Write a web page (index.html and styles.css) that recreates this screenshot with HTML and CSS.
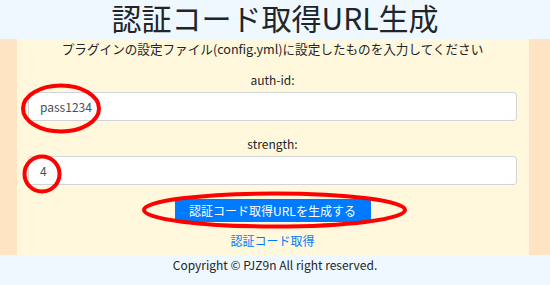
FILE: index.html
```html
<!DOCTYPE html>
<html lang="ja">
<head>
<meta charset="utf-8">
<title>認証コード取得URL生成</title>
<link rel="stylesheet" href="styles.css">
</head>
<body>
<header class="site-header">
  <h1 class="title">認証コード取得URL生成</h1>
</header>
<div class="page">
  <main class="content">
    <p class="lead">プラグインの設定ファイル(config.yml)に設定したものを入力してください</p>
    <div class="field field-first">
      <label class="field-label" for="auth-id">auth-id:</label>
      <input class="field-input" id="auth-id" type="text" value="pass1234">
    </div>
    <div class="field field-second">
      <label class="field-label" for="strength">strength:</label>
      <input class="field-input" id="strength" type="text" value="4">
    </div>
    <div class="actions">
      <button class="btn-primary" type="button">認証コード取得URLを生成する</button>
    </div>
    <a class="sub-link" href="#">認証コード取得</a>
  </main>
</div>
<footer class="site-footer">Copyright © PJZ9n All right reserved.</footer>
<svg class="marks" width="550" height="285" viewBox="0 0 550 285" aria-hidden="true">
  <ellipse cx="61" cy="108.5" rx="38" ry="23" fill="none" stroke="#ff0000" stroke-width="4"/>
  <ellipse cx="42" cy="174" rx="17.5" ry="17.5" fill="none" stroke="#ff0000" stroke-width="4"/>
  <ellipse cx="274.5" cy="210" rx="130.5" ry="16.5" fill="none" stroke="#ff0000" stroke-width="4"/>
</svg>
</body>
</html>
```
FILE: styles.css
```css
html, body {
  margin: 0;
  padding: 0;
}
body {
  position: relative;
  width: 550px;
  height: 285px;
  overflow: hidden;
  font-family: "Noto Sans CJK JP", "Noto Sans", sans-serif;
  font-size: 12px;
  line-height: 18px;
  color: #212529;
  background: #f0f8ff;
}
.site-header {
  height: 39px;
  background: #f0f8ff;
  text-align: center;
}
.title {
  margin: 0;
  font-size: 30px;
  line-height: 34px;
  font-weight: 400;
  color: #212529;
}
.page {
  background: #ffe4c4;
  padding: 0 21px 0 17px;
}
.content {
  background: #fff8dc;
  height: 216px;
  box-sizing: border-box;
  padding: 1px 12px 0 11px;
  text-align: center;
}
.lead {
  margin: 0;
  font-size: 12.6px;
  line-height: 18px;
}
.field {
  display: flex;
  flex-direction: column;
  align-items: stretch;
}
.field-first {
  margin-top: 13px;
}
.field-second {
  margin-top: 14px;
}
.field-label {
  display: block;
  line-height: 18px;
  margin-bottom: 3px;
}
.field-input {
  box-sizing: border-box;
  width: 100%;
  height: 29px;
  padding: 0 11px;
  border: 1px solid #ced4da;
  border-radius: 3px;
  background: #fff;
  font-family: "Noto Sans CJK JP", "Noto Sans", sans-serif;
  font-size: 12px;
  color: #495057;
  outline: none;
}
.actions {
  margin-top: 14px;
  display: flex;
  justify-content: center;
}
.btn-primary {
  width: 196px;
  height: 23px;
  padding: 0;
  border: none;
  border-radius: 2px;
  background: #007bff;
  color: #fff;
  font-family: "Noto Sans CJK JP", "Noto Sans", sans-serif;
  font-size: 12px;
  line-height: 23px;
}
.sub-link {
  display: inline-block;
  margin-top: 10px;
  color: #007bff;
  text-decoration: none;
  line-height: 18px;
}
.site-footer {
  height: 30px;
  background: #f0f8ff;
  text-align: center;
  line-height: 20px;
  font-size: 12px;
}
.marks {
  position: absolute;
  left: 0;
  top: 0;
  pointer-events: none;
}
```
